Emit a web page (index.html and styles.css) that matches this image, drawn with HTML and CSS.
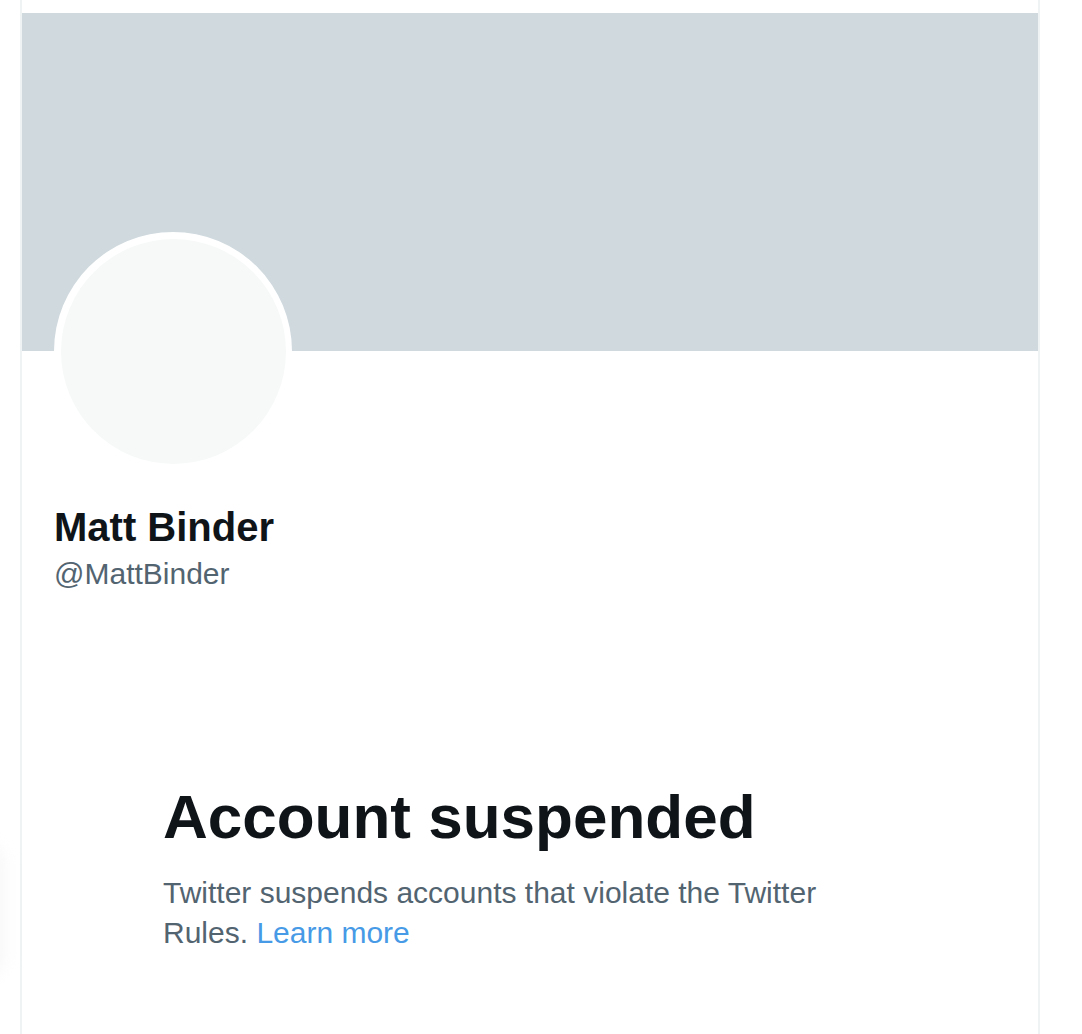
FILE: index.html
```html
<!DOCTYPE html>
<html lang="en">
<head>
<meta charset="utf-8">
<title>Matt Binder (@MattBinder)</title>
<link rel="stylesheet" href="styles.css">
</head>
<body>
<div class="page">
  <div class="edge-shadow"></div>
  <main class="column">
    <div class="banner"></div>
    <section class="profile">
      <div class="avatar"><div class="avatar-inner"></div></div>
      <div class="name">Matt Binder</div>
      <div class="handle">@MattBinder</div>
    </section>
    <section class="empty">
      <h1 class="empty-title">Account suspended</h1>
      <p class="empty-text">Twitter suspends accounts that violate the Twitter Rules. <a class="link" href="#">Learn more</a></p>
    </section>
  </main>
</div>
</body>
</html>
```

FILE: styles.css
```css
html, body {
  margin: 0;
  padding: 0;
  background: #ffffff;
  height: 100%;
  overflow: hidden;
}
.page {
  position: relative;
  display: flex;
  padding-left: 20px;
  height: 1034px;
  font-family: "Liberation Sans", Arial, sans-serif;
}
.edge-shadow {
  position: absolute;
  left: -30px;
  top: 845px;
  width: 34px;
  height: 130px;
  border-radius: 20px;
  background: #f7f7f7;
  filter: blur(8px);
}
.column {
  width: 1016px;
  border-left: 2px solid #eff3f4;
  border-right: 2px solid #eff3f4;
  padding-top: 13px;
  box-sizing: content-box;
}
.banner {
  height: 338px;
  background: #cfd9de;
}
.profile {
  padding: 0 32px;
}
.avatar {
  width: 238px;
  height: 238px;
  margin-top: -119px;
  margin-bottom: 33px;
  border-radius: 50%;
  background: #ffffff;
  display: flex;
  align-items: center;
  justify-content: center;
}
.avatar-inner {
  width: 225px;
  height: 225px;
  border-radius: 50%;
  background: #f7f9f9;
}
.name {
  font-size: 40px;
  line-height: 48px;
  font-weight: 700;
  color: #0f1419;
}
.handle {
  margin-top: 3px;
  font-size: 30px;
  line-height: 40px;
  color: #536471;
}
.empty {
  padding-left: 141px;
  margin-top: 187px;
  width: 710px;
}
.empty-title {
  margin: 0;
  font-size: 62px;
  line-height: 72px;
  font-weight: 800;
  color: #0f1419;
}
.empty-text {
  margin: 20px 0 0;
  font-size: 30px;
  line-height: 40px;
  color: #536471;
}
.link {
  color: #479ae6;
  text-decoration: none;
}
```
